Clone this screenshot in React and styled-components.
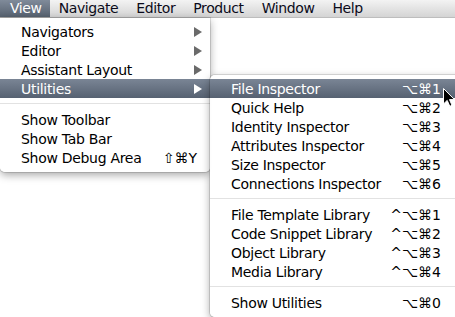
import React from "react";
import styled, { createGlobalStyle } from "styled-components";

const menuBarItems = ["View", "Navigate", "Editor", "Product", "Window", "Help"];

const viewMenu = [
  { label: "Navigators", submenu: true },
  { label: "Editor", submenu: true },
  { label: "Assistant Layout", submenu: true },
  { label: "Utilities", submenu: true, active: true },
  { separator: true },
  { label: "Show Toolbar" },
  { label: "Show Tab Bar" },
  { label: "Show Debug Area", shortcut: "⇧⌘Y" },
];

const utilitiesMenu = [
  { label: "File Inspector", shortcut: "⌥⌘1", active: true },
  { label: "Quick Help", shortcut: "⌥⌘2" },
  { label: "Identity Inspector", shortcut: "⌥⌘3" },
  { label: "Attributes Inspector", shortcut: "⌥⌘4" },
  { label: "Size Inspector", shortcut: "⌥⌘5" },
  { label: "Connections Inspector", shortcut: "⌥⌘6" },
  { separator: true },
  { label: "File Template Library", shortcut: "^⌥⌘1" },
  { label: "Code Snippet Library", shortcut: "^⌥⌘2" },
  { label: "Object Library", shortcut: "^⌥⌘3" },
  { label: "Media Library", shortcut: "^⌥⌘4" },
  { separator: true },
  { label: "Show Utilities", shortcut: "⌥⌘0" },
];

function MenuList({ items, padRight }) {
  return items.map((item, i) =>
    item.separator ? (
      <Separator key={i} />
    ) : (
      <Item key={i} $active={item.active} $padRight={padRight}>
        <Label>{item.label}</Label>
        {item.shortcut && <Shortcut>{item.shortcut}</Shortcut>}
        {item.submenu && (
          <Arrow viewBox="0 0 8 10" $active={item.active}>
            <path d="M0 0 L8 5 L0 10 Z" />
          </Arrow>
        )}
      </Item>
    )
  );
}

export default function App() {
  return (
    <>
      <GlobalStyle />
      <Screen>
        <MenuBar>
          {menuBarItems.map((name, i) => (
            <BarItem key={name} $active={i === 0}>
              {name}
            </BarItem>
          ))}
        </MenuBar>
        <Stage>
          <ViewMenu>
            <MenuList items={viewMenu} padRight={13} />
          </ViewMenu>
          <SubMenu>
            <MenuList items={utilitiesMenu} padRight={29} />
          </SubMenu>
          <Cursor viewBox="0 0 12 19">
            <path
              d="M0.5 0.5 L0.5 16 L4.2 12.4 L6.8 18.3 L9 17.3 L6.5 11.6 L11.5 11.6 Z"
              fill="#000"
              stroke="#fff"
              strokeWidth="1"
            />
          </Cursor>
        </Stage>
      </Screen>
    </>
  );
}

const GlobalStyle = createGlobalStyle`
  html, body {
    margin: 0;
    padding: 0;
    background: #fff;
    overflow: hidden;
  }
  body {
    font-family: "DejaVu Sans", "Liberation Sans", sans-serif;
    -webkit-font-smoothing: antialiased;
  }
`;

const Screen = styled.div`
  width: 455px;
  height: 317px;
  overflow: hidden;
  background: #fff;
`;

const MenuBar = styled.div`
  display: flex;
  height: 18px;
  background: linear-gradient(#f3f3f3, #d4d4d4);
  border-bottom: 1px solid #bdbdbd;
  box-sizing: border-box;
`;

const BarItem = styled.div`
  height: 17px;
  line-height: 17px;
  padding: 0 9px;
  font-size: 14px;
  letter-spacing: -0.4px;
  color: ${(p) => (p.$active ? "#fff" : "#0b0b1a")};
  background: ${(p) =>
    p.$active ? "linear-gradient(#808b9a, #56616f)" : "transparent"};

  &:first-child {
    padding: 0 8px 0 10px;
  }
`;

const Stage = styled.div`
  position: relative;
  display: flex;
  align-items: flex-start;
`;

const Menu = styled.div`
  flex-shrink: 0;
  background: rgba(255, 255, 255, 0.97);
  padding: 4px 0 5px;
  box-shadow: 0 0 0 1px rgba(0, 0, 0, 0.12), 0 3px 8px rgba(0, 0, 0, 0.35);
`;

const ViewMenu = styled(Menu)`
  width: 210px;
  border-radius: 0 0 5px 5px;
  z-index: 1;
`;

const SubMenu = styled(Menu)`
  width: 260px;
  margin-top: 57px;
  border-radius: 5px 0 0 5px;
  z-index: 2;
`;

const Item = styled.div`
  display: flex;
  align-items: center;
  height: 19px;
  padding: 0 ${(p) => p.$padRight}px 0 21px;
  font-size: 14px;
  letter-spacing: -0.3px;
  color: ${(p) => (p.$active ? "#fff" : "#000")};
  background: ${(p) =>
    p.$active ? "linear-gradient(#7a8595, #566171)" : "transparent"};
`;

const Label = styled.span`
  flex: 1;
  white-space: nowrap;
`;

const Shortcut = styled.span`
  white-space: nowrap;
  letter-spacing: 0;
`;

const Arrow = styled.svg`
  width: 8px;
  height: 10px;
  margin-right: -5px;
  fill: ${(p) => (p.$active ? "#fff" : "#6a6a6a")};
`;

const Separator = styled.div`
  height: 1px;
  margin: 5px 0 6px;
  background: #e2e2e2;
`;

const Cursor = styled.svg`
  position: absolute;
  left: 443px;
  top: 70px;
  width: 12px;
  height: 19px;
  z-index: 3;
`;
